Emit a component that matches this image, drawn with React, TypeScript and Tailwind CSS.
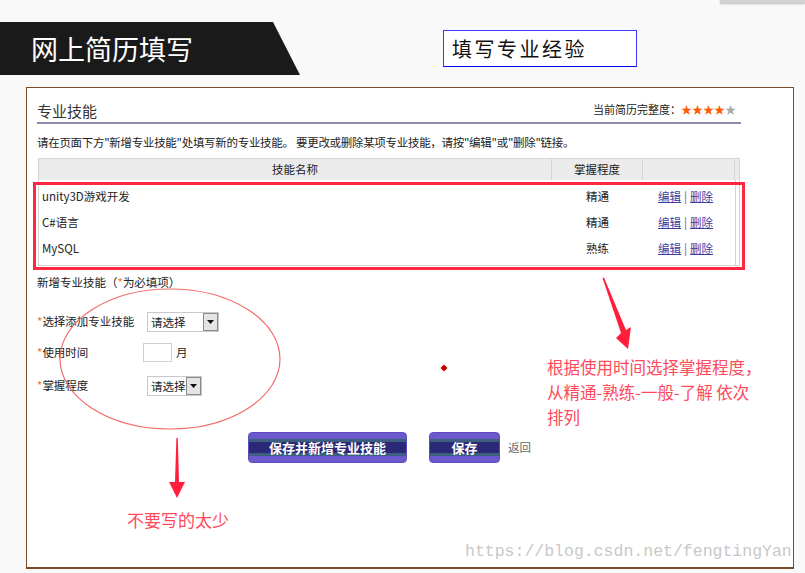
const rows = [
  { name: 'unity3D游戏开发', level: '精通' },
  { name: 'C#语言', level: '精通' },
  { name: 'MySQL', level: '熟练' },
]

const btnBg =
  'bg-[linear-gradient(to_bottom,#6a58cc_0%,#6a58cc_20%,#3d5f7e_20%,#3d5f7e_31%,#2c2878_31%,#2c2878_70%,#3d5f7e_70%,#3d5f7e_80%,#6a58cc_80%)]'

function Select({ width }: { width: string }) {
  return (
    <div className={`flex h-[20px] ${width} border border-[#c9c9c9] bg-white`}>
      <span className="flex-1 pl-[3px] text-[11.5px] leading-[18px] text-[#222] whitespace-nowrap overflow-hidden">请选择</span>
      <span className="flex w-[15px] items-center justify-center border border-[#8a8a8a] bg-[#e4e4e4]">
        <svg width="7" height="4" viewBox="0 0 7 4">
          <path d="M0 0h7L3.5 4z" fill="#111" />
        </svg>
      </span>
    </div>
  )
}

function Star({ on }: { on: boolean }) {
  return <span className={on ? 'text-[#ff5a00]' : 'text-[#a8a8a8]'}>★</span>
}

export default function App() {
  return (
    <div className="relative h-[573px] w-[805px] overflow-hidden bg-[#f9f9f9] font-['Noto_Sans_CJK_SC',sans-serif] text-[#222]">
      <div className="absolute right-0 top-0 h-[3px] w-[85px] bg-[#d2d2d2] shadow-[0_1px_2px_#bbb]" />

      {/* header */}
      <div className="flex h-[87px] items-start">
        <div className="mt-[22px] flex h-[53px] w-[300px] items-center bg-[#1a1a1a] pl-[31px] [clip-path:polygon(0_0,273px_0,300px_100%,0_100%)]">
          <span className="text-[27px] leading-none text-white">网上简历填写</span>
        </div>
        <div className="ml-[143px] mt-[30px] flex h-[37px] w-[194px] items-center border border-[#3a3aff] border-b-[#0000ff] bg-white pl-[8px]">
          <span className="text-[20px] leading-none tracking-[2.5px] text-[#111]">填写专业经验</span>
        </div>
      </div>

      {/* panel */}
      <div className="ml-[26px] h-[482px] w-[768px] border border-b-2 border-[#7b4a2c] bg-white pl-[10px]">
        <div className="flex h-[34px] w-[704px] items-end justify-between pb-[1px]">
          <span className="text-[15px] leading-[20px] text-[#333]">专业技能</span>
          <span className="mb-[5px] mr-[5px] text-[11px] leading-[14px] text-[#222]">
            当前简历完整度：
            <Star on />
            <Star on />
            <Star on />
            <Star on />
            <Star on={false} />
          </span>
        </div>
        <div className="h-[2px] w-[704px] bg-[#8e88aa]" />
        <p className="mt-[10px] text-[11.5px] leading-[16px] tracking-[-0.3px] text-[#222]">
          请在页面下方"新增专业技能"处填写新的专业技能。 要更改或删除某项专业技能，请按"编辑"或"删除"链接。
        </p>

        {/* table */}
        <div className="ml-[1px] mt-[8px] w-[702px] border border-[#d4d4d4]">
          <div className="grid h-[21px] grid-cols-[513px_91px_92px_4px] bg-[#ebebeb] text-[11.5px] leading-[21px]">
            <div className="border-r border-[#d4d4d4] text-center">技能名称</div>
            <div className="border-r border-[#d4d4d4] text-center">掌握程度</div>
            <div className="border-r border-[#d4d4d4]" />
            <div />
          </div>
          <div className="flex">
            <div className="w-[696px] pb-[3px] pt-[4px]">
              {rows.map((r) => (
                <div key={r.name} className="grid h-[26px] grid-cols-[513px_91px_92px] items-center text-[11.5px]">
                  <span className="pl-[3px]">{r.name}</span>
                  <span className="text-center">{r.level}</span>
                  <span className="pl-[15px]">
                    <a className="text-[#3d3d9e] underline">编辑</a>
                    <span className="mx-[3px] text-[#7a4aa0]">|</span>
                    <a className="text-[#3d3d9e] underline">删除</a>
                  </span>
                </div>
              ))}
            </div>
            <div className="w-[4px] border-l border-[#d4d4d4]" />
          </div>
        </div>

        <p className="mt-[8px] text-[11.5px] leading-[16px]">
          新增专业技能（<span className="text-[#f07020]">*</span>为必填项）
        </p>

        {/* form */}
        <div className="mt-[22px] flex items-center text-[11.5px]">
          <span className="w-[110px]"><span className="text-[#f07020]">*</span>选择添加专业技能</span>
          <Select width="w-[72px]" />
        </div>
        <div className="mt-[11px] flex items-center text-[11.5px]">
          <span className="w-[106px]"><span className="text-[#f07020]">*</span>使用时间</span>
          <div className="h-[19px] w-[29px] border border-[#d0d0d0] bg-white" />
          <span className="ml-[4px]">月</span>
        </div>
        <div className="mt-[14px] flex items-center text-[11.5px]">
          <span className="w-[110px]"><span className="text-[#f07020]">*</span>掌握程度</span>
          <Select width="w-[55px]" />
        </div>

        <div className="ml-[211px] mt-[36px] flex items-center">
          <button className={`h-[31px] w-[159px] rounded-[4px] border border-[#5a4cbc] ${btnBg} text-[13px] font-bold text-white`}>
            保存并新增专业技能
          </button>
          <button className={`ml-[22px] h-[31px] w-[71px] rounded-[4px] border border-[#5a4cbc] ${btnBg} text-[13px] font-bold text-white`}>
            保存
          </button>
          <span className="ml-[8px] text-[11.5px] text-[#666]">返回</span>
        </div>
      </div>

      {/* annotations */}
      <div className="absolute left-[33px] top-[182px] h-[88px] w-[712px] border-[3px] border-[#ff2642]" />
      <svg className="pointer-events-none absolute left-0 top-0" width="805" height="573">
        <ellipse cx="170" cy="359" rx="110" ry="70" fill="none" stroke="#f26b6b" strokeWidth="1.2" />
        <polygon points="176.4,438 177.8,438 179,482 185,482 177,498 169,482 175,482" fill="#ff1f3d" />
        <polygon points="602.5,278 604,277.5 626,330 631,327 628,349 616,338 621,333" fill="#ff1f3d" />
        <rect x="441.5" y="365.5" width="5" height="5" transform="rotate(45 444 368)" fill="#c00000" />
      </svg>
      <div className="absolute left-[547px] top-[355px] whitespace-nowrap text-[16.5px] leading-[25px] text-[#ff4a5c]">
        根据使用时间选择掌握程度，
        <br />
        从精通-熟练-一般-了解 依次
        <br />
        排列
      </div>
      <div className="absolute left-[127px] top-[508px] text-[17px] leading-[24px] text-[#ff4a5c]">不要写的太少</div>
      <div className="absolute left-[465px] top-[541px] font-['Liberation_Mono',monospace] text-[16.5px] leading-[22px] text-[#c8c8c8]">
        https://blog.csdn.net/fengtingYan
      </div>
    </div>
  )
}
